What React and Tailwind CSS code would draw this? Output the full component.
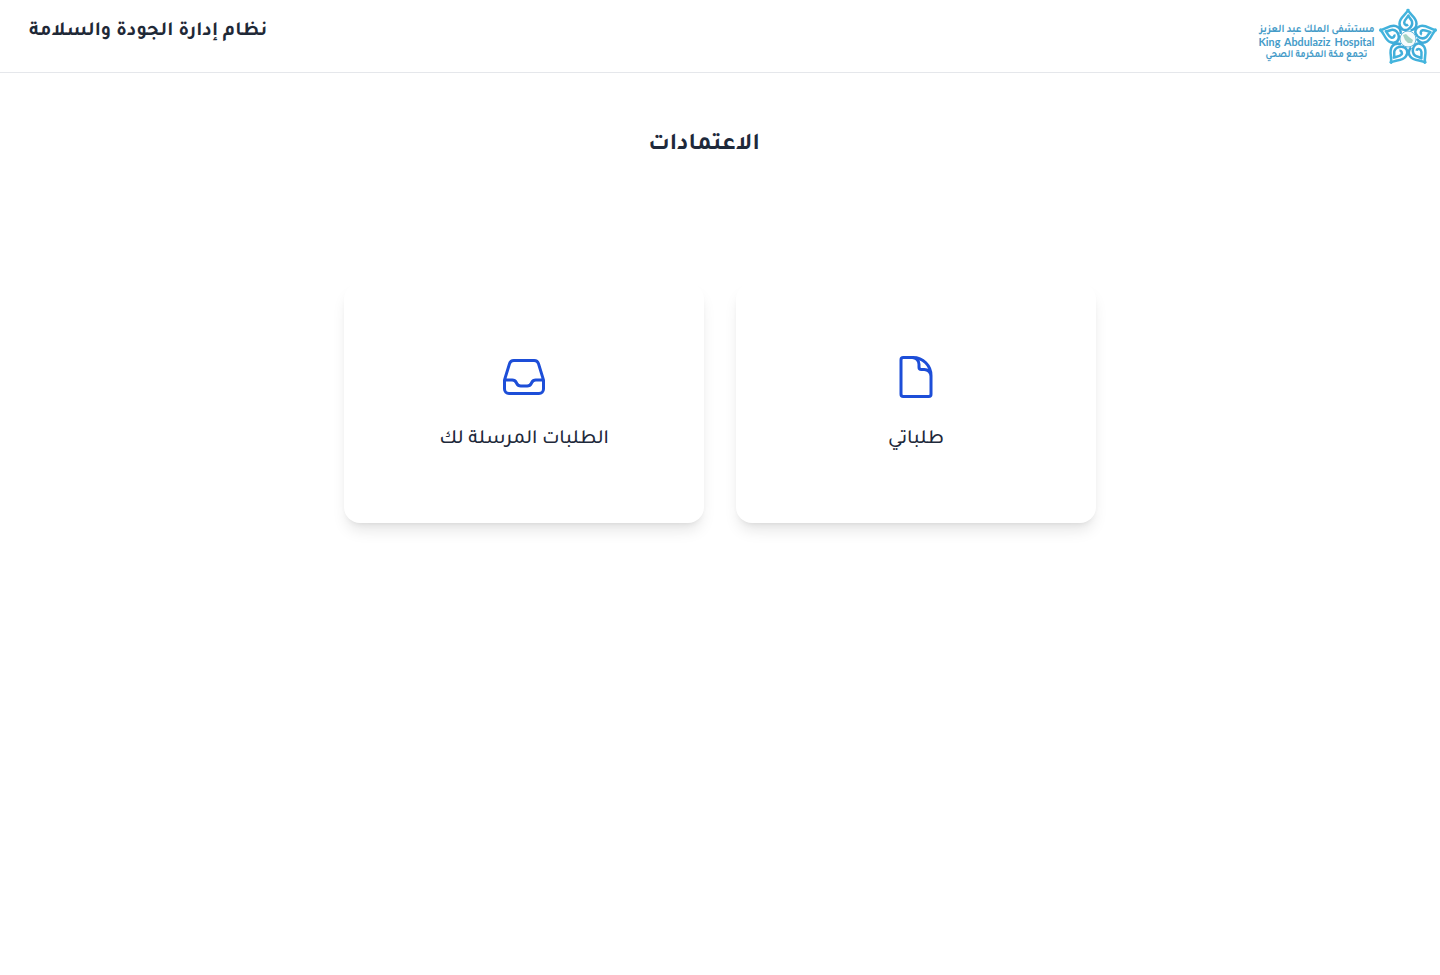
import { HiOutlineDocument, HiOutlineInbox } from "react-icons/hi2";

const PETAL_ANGLES = [0, 72, 144, 216, 288];

function Petal({ angle }) {
  return (
    <g transform={`rotate(${angle})`}>
      <path d="M-.4-30C1-24.500 8.500-22 8.500-15.500C8.500-12 6.500-9.500 2.500-8.500" />
      <path d="M.4-30C-1-24.500-8.500-22-8.500-15.500C-8.500-9.500-3.500-7.500 .5-10C3.500-12 4.600-15 4-17.500C3.500-19.500 1-21 .5-23.500C-1-21-3.800-19-3.800-16.500C-3.800-14.500-1.500-13 0-14.500" />
    </g>
  );
}

function HospitalLogo() {
  return (
    <div className="flex h-[76px] items-center gap-0.5">
      <svg width="60" height="62" viewBox="-30 -32 60 62" className="shrink-0 overflow-visible" aria-hidden="true">
        <defs>
          <linearGradient id="petals" gradientUnits="userSpaceOnUse" x1="-12" y1="-30" x2="12" y2="28">
            <stop offset="0" stopColor="#45b9df" />
            <stop offset="1" stopColor="#3490cc" />
          </linearGradient>
        </defs>
        <g fill="none" stroke="url(#petals)" strokeWidth="2.500" strokeLinejoin="round">
          {PETAL_ANGLES.map((angle) => (
            <Petal key={angle} angle={angle} />
          ))}
        </g>
        <circle r="8" fill="#f7fbfc" stroke="#62b6dc" strokeWidth="1" />
        <path d="M-5-4L-2-5L1-2L5 1L4 4L0 4L-3 1Z" fill="#a4d2c4" />
      </svg>
      <svg width="118" height="60" viewBox="0 0 118 60" fill="#459bc8" className="shrink-0 overflow-visible font-['Tajawal',sans-serif] font-bold" direction="rtl">
        <text x="59" y="23.500" fontSize="11.500" textAnchor="middle" textLength="115" lengthAdjust="spacingAndGlyphs">مستشفى الملك عبد العزيز</text>
        <text x="58.500" y="38" fontSize="11" textAnchor="middle" direction="ltr" textLength="116" lengthAdjust="spacingAndGlyphs" wordSpacing="1.500" className="font-['Lato',sans-serif] font-bold">King Abdulaziz Hospital</text>
        <text x="58.500" y="48.500" fontSize="11" textAnchor="middle" textLength="102" lengthAdjust="spacingAndGlyphs">تجمع مكة المكرمة الصحي</text>
      </svg>
    </div>
  );
}

function Card({ icon: Icon, label }) {
  return (
    <a className="flex h-60 flex-col items-center justify-center rounded-2xl bg-white shadow-lg">
      <Icon className="mb-6 size-12 text-[#1d4ed8]" />
      <span className="-mb-px pt-px text-xl font-medium">{label}</span>
    </a>
  );
}

export default function App() {
  return (
    <div dir="rtl" className="min-h-screen bg-white font-['Tajawal',sans-serif] text-[#1e293b]">
      <header className="flex h-[73px] items-start justify-between border-b border-gray-200 bg-white pr-0.5 pl-[29px]">
        <HospitalLogo />
        <h1 className="pt-[18px] text-xl font-bold text-[#1f2937]">نظام إدارة الجودة والسلامة</h1>
      </header>
      <main className="flex flex-col items-center">
        <h2 className="mt-[57px] mr-8 text-2xl font-bold">الاعتمادات</h2>
        <div className="mt-[121px] grid w-[752px] grid-cols-2 gap-8">
          <Card icon={HiOutlineDocument} label="طلباتي" />
          <Card icon={HiOutlineInbox} label="الطلبات المرسلة لك" />
        </div>
      </main>
    </div>
  );
}
